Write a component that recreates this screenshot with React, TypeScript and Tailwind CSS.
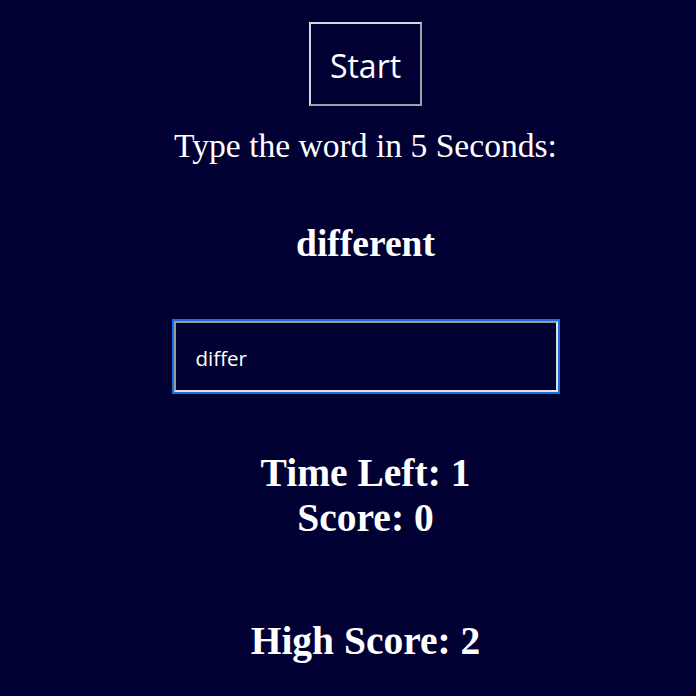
import React from "react";

export default function App() {
  return (
    <div className="min-h-[696px] w-full bg-[#000033] text-white">
      <div className="flex flex-col items-center pl-[35px]">
        <button className="mt-[22px] flex h-[84px] w-[113px] items-center justify-center border-2 border-t-[#d8d8d8] border-l-[#d8d8d8] border-b-[#a0a0a0] border-r-[#a0a0a0] bg-transparent pt-[3px] font-['Open_Sans',sans-serif] text-[32px] leading-none text-white">
          Start
        </button>
        <div className="mt-[23px] font-['Liberation_Serif',serif] text-[33.6px] leading-none">
          Type the word in 5 Seconds:
        </div>
        <div className="mt-[62px] font-['Liberation_Serif',serif] text-[37.5px] font-bold leading-none">
          different
        </div>
        <input
          readOnly
          value="differ"
          className="mt-[59px] box-border h-[71px] w-[384px] border-2 border-t-[#9a9a9a] border-l-[#9a9a9a] border-b-[#e2e2e2] border-r-[#e2e2e2] bg-transparent pt-[2px] pl-[20px] font-['Open_Sans',sans-serif] text-[20.5px] text-white outline-2 outline-solid outline-[#1a6fe0]"
        />
        <div className="mt-[59px] text-center font-['Liberation_Serif',serif] text-[39.5px] font-bold leading-[45px]">
          <div>Time Left: 1</div>
          <div>Score: 0</div>
        </div>
        <div className="mt-[81px] font-['Liberation_Serif',serif] text-[39.5px] font-bold leading-none">
          High Score: 2
        </div>
      </div>
    </div>
  );
}
